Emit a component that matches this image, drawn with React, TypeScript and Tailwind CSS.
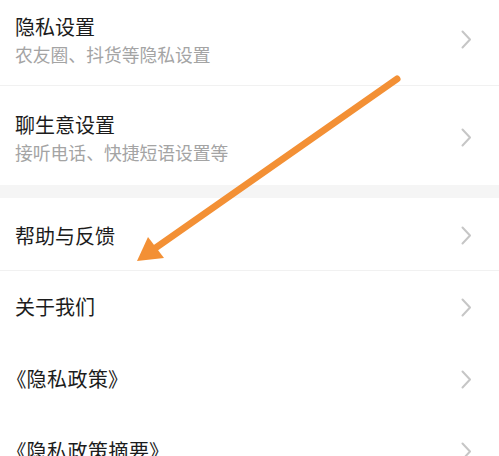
import React from "react";

function Chevron() {
  return (
    <svg width="11" height="19" viewBox="0 0 11 19" className="shrink-0">
      <polyline points="1.5,1.5 9,9.5 1.5,17.5" fill="none" stroke="#c6c6c6" strokeWidth="2" strokeLinecap="round" strokeLinejoin="round" />
    </svg>
  );
}

function Row({ title, sub, className, titleClass = "" }: { title: string; sub?: string; className: string; titleClass?: string }) {
  return (
    <div className={`flex items-center justify-between pl-[15px] pr-[27px] ${className}`}>
      <div className="flex flex-col">
        <div className={`text-[20px] leading-[28px] text-[#1c1c1c] ${titleClass}`}>{title}</div>
        {sub && <div className="text-[17.8px] leading-[26px] text-[#a4a4a4]">{sub}</div>}
      </div>
      <Chevron />
    </div>
  );
}

export default function App() {
  return (
    <div className="relative w-[499px] h-[456px] overflow-hidden bg-white font-['Noto_Sans_CJK_SC',sans-serif]">
      <div className="flex flex-col">
        <Row title="隐私设置" sub="农友圈、抖货等隐私设置" className="h-[86px] pb-[6px] border-b border-[#f1f1f1]" />
        <Row title="聊生意设置" sub="接听电话、快捷短语设置等" className="h-[99px] pt-[4px]" />
        <div className="h-[13px] bg-[#f5f5f5]" />
        <Row title="帮助与反馈" className="h-[73px] pt-[3px] border-b border-[#f1f1f1]" />
        <Row title="关于我们" className="h-[72px]" />
        <Row title="《隐私政策》" className="h-[72px]" titleClass="[font-feature-settings:'palt'] ml-[1px] tracking-[0.5px]" />
        <Row title="《隐私政策摘要》" className="h-[72px]" titleClass="[font-feature-settings:'palt'] ml-[1px] tracking-[0.5px]" />
      </div>
      <svg className="absolute left-0 top-0 pointer-events-none" width="499" height="456" viewBox="0 0 499 456">
        <line x1="397" y1="79" x2="154" y2="249" stroke="#f39035" strokeWidth="7" strokeLinecap="round" />
        <polygon points="137,261 148,237 164,258" fill="#f39035" />
      </svg>
    </div>
  );
}
